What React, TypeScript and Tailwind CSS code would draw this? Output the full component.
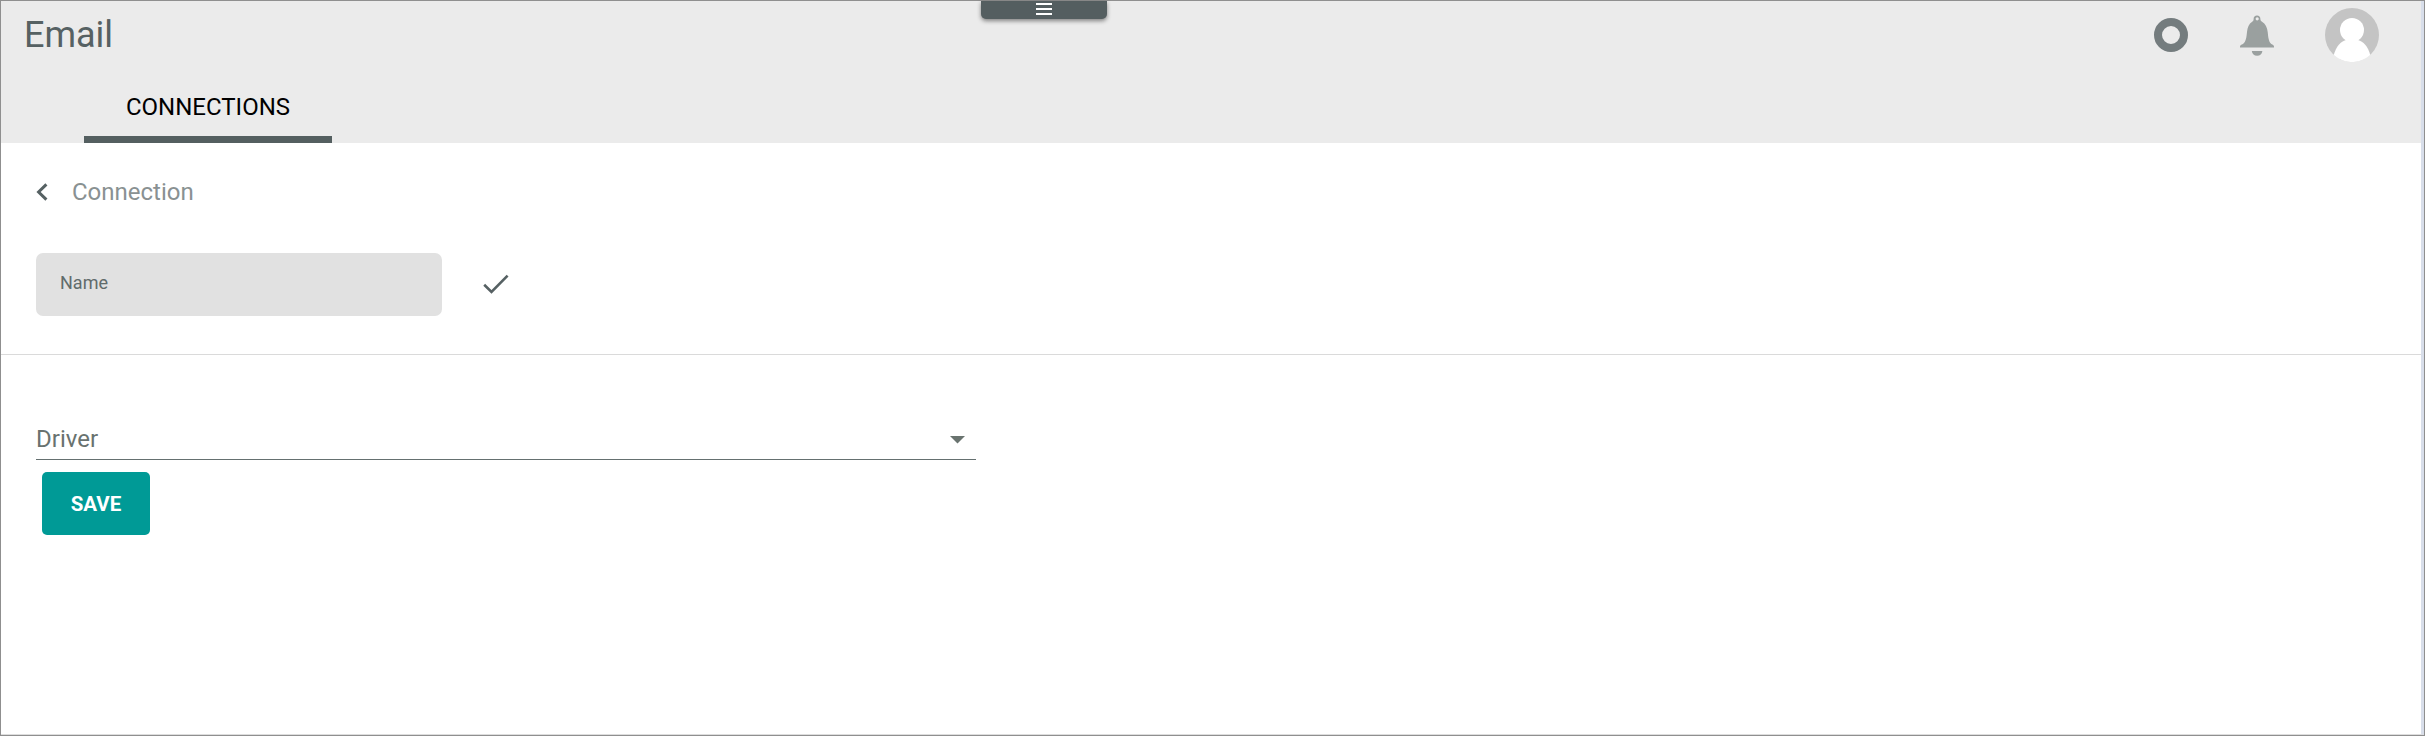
function Header() {
  return (
    <header className="h-[142px] shrink-0 bg-[#ebebeb]">
      <div className="grid h-[79px] grid-cols-[980px_126px_1fr]">
        <h1 className="pl-[23px] pt-[13px] text-[36px] leading-[42px] text-[#566163]">Email</h1>
        <button
          aria-label="Menu"
          className="flex h-[18px] flex-col items-center gap-[3px] rounded-b-[5px] bg-[#545e60] pt-[2px] shadow-[0_2px_4px_rgba(0,0,0,0.45)]"
        >
          <span className="h-[2px] w-4 shrink-0 bg-white" />
          <span className="h-[2px] w-4 shrink-0 bg-white" />
          <span className="h-[2px] w-4 shrink-0 bg-white" />
        </button>
        <div className="flex h-[68px] items-center justify-end pr-[42px]">
          <div className="mr-[52px] h-[34px] w-[34px] rounded-full border-[8.5px] border-[#747c7e]" />
          <svg className="mr-[51px] h-[41px] w-[34px]" viewBox="0 0 34 41" fill="#9aa09f">
            <path
              fillRule="evenodd"
              d="M17 0.5C14.9 0.5 13.6 2 13.6 4C13.6 5 13.5 5.9 12.2 6.7C8.8 8.7 7.5 12.4 7 17C6.5 22 6 26.8 3 29C1.3 29.8 0 30.2 0 31.4V32.5H34V31.4C34 30.2 32.7 29.8 31.3 29C28.7 26.8 28.2 22 27.7 17C27.2 12.4 25.5 8.7 22 6.7C20.6 5.9 20.4 5 20.4 4C20.4 2 19.1 0.5 17 0.5ZM17.2 2.2A1.6 1.6 0 0 1 17.2 5.4A1.6 1.6 0 0 1 17.2 2.2Z"
            />
            <path d="M11.8 36H22.4C22.1 39 20 40.7 17.1 40.7C14.2 40.7 12.1 39 11.8 36Z" />
          </svg>
          <svg className="h-[54px] w-[54px]" viewBox="0 0 54 54">
            <circle cx="27" cy="27" r="27" fill="#c4c4c4" />
            <circle cx="27" cy="22" r="12" fill="#fff" />
            <path
              d="M8.7 46.9C11.2 38.5 15.8 33.2 21 32H33C38.2 33.2 43 38.5 45.3 46.9A27 27 0 0 1 8.7 46.9Z"
              fill="#fff"
            />
          </svg>
        </div>
      </div>
      <nav className="pl-[83px]">
        <button className="flex h-[63px] w-[248px] justify-center border-b-[7px] border-[#545f60] pt-[13px] text-[24px] leading-[28px] text-black">
          CONNECTIONS
        </button>
      </nav>
    </header>
  );
}

export default function App() {
  return (
    <div className="h-[736px] w-[2425px] border border-[#8f8f8f] bg-white font-['Roboto',sans-serif]">
      <div className="flex h-full flex-col border-r-[3px] border-b border-r-[#d8deea] border-b-[#dddddd]">
        <Header />
        <div className="flex h-[109px] items-start pl-[35px] pt-[35px]">
          <svg className="mt-[5px] h-[18px] w-[12px]" viewBox="0 0 12 18" fill="none">
            <path d="M10.4 1.4L2.6 9L10.4 16.6" stroke="#566163" strokeWidth="3" />
          </svg>
          <span className="ml-6 text-[24px] leading-[28px] text-[#899192]">Connection</span>
        </div>
        <div className="flex h-[103px] items-start border-b border-[#dadada] pl-[35px]">
          <div className="mt-px flex h-[63px] w-[406px] items-start rounded-[7px] bg-[#e1e1e1] pl-6 pt-[19px] text-[18px] leading-[22px] text-[#606b6b]">
            Name
          </div>
          <svg className="ml-[41px] mt-[22px] h-[20px] w-[26px]" viewBox="0 0 26 20" fill="none">
            <path d="M1.2 10.8L8.5 18L24.6 1.7" stroke="#566163" strokeWidth="2.6" />
          </svg>
        </div>
        <main className="pl-[35px] pt-[70px]">
          <div className="flex h-[35px] w-[940px] items-start justify-between border-b border-[#657070] text-[24px] leading-[28px] text-[#69726f]">
            <span>Driver</span>
            <svg className="mr-[11px] mt-[11px] h-[8px] w-[15px]" viewBox="0 0 15 8" fill="#69736f">
              <path d="M0 0H15L7.5 7.5Z" />
            </svg>
          </div>
          <button className="ml-[6px] mt-[12px] flex h-[63px] w-[108px] items-center justify-center rounded-[5px] bg-[#009a96] text-[20.5px] leading-[24px] font-bold text-white">
            SAVE
          </button>
        </main>
      </div>
    </div>
  );
}
